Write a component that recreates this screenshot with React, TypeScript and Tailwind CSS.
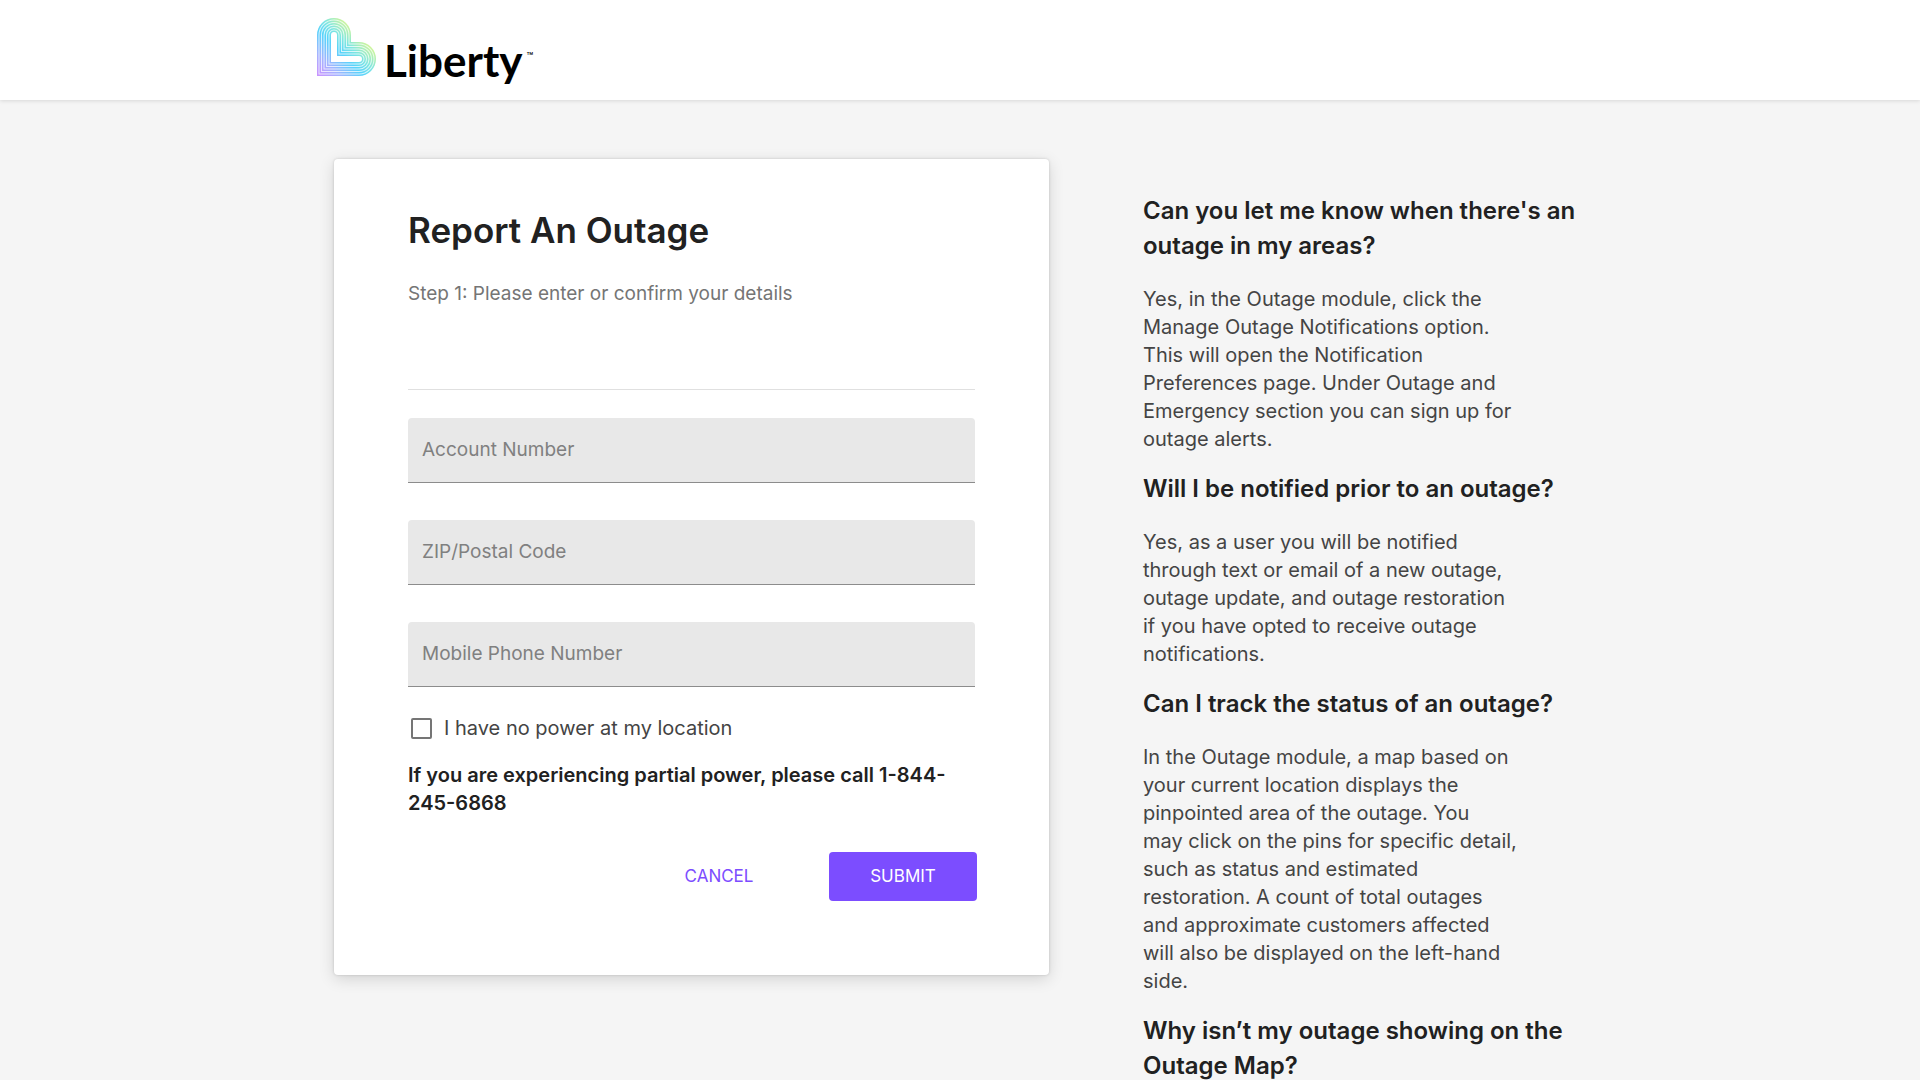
import { useState } from 'react';
import type { FormEvent } from 'react';

interface FaqItem {
  question: string;
  answer: string;
}

const faqs: FaqItem[] = [
  {
    question: "Can you let me know when there's an outage in my areas?",
    answer:
      'Yes, in the Outage module, click the Manage Outage Notifications option. This will open the Notification Preferences page. Under Outage and Emergency section you can sign up for outage alerts.',
  },
  {
    question: 'Will I be notified prior to an outage?',
    answer:
      'Yes, as a user you will be notified through text or email of a new outage, outage update, and outage restoration if you have opted to receive outage notifications.',
  },
  {
    question: 'Can I track the status of an outage?',
    answer:
      'In the Outage module, a map based on your current location displays the pinpointed area of the outage. You\nmay click on the pins for specific detail, such as status and estimated restoration. A count of total outages and approximate customers affected will also be displayed on the left-hand side.',
  },
  {
    question: 'Why isn’t my outage showing on the Outage Map?',
    answer: '',
  },
];

const fields = [
  { id: 'accountNumber', label: 'Account Number', type: 'text' },
  { id: 'postalCode', label: 'ZIP/Postal Code', type: 'text' },
  { id: 'mobilePhone', label: 'Mobile Phone Number', type: 'tel' },
];

// Stroke widths of the nested outlines, alternating filled and cut out
const rings = [34, 31, 29, 26, 24, 21, 19, 16, 14, 11, 9, 6];

const LogoMark = () => (
  <svg className="h-[59px] w-[59px] shrink-0" viewBox="0 0 59 59" aria-hidden="true">
    <defs>
      <linearGradient id="markFill" gradientUnits="userSpaceOnUse" x1="2" y1="57" x2="42" y2="17">
        <stop offset="0" stopColor="#c796ff" />
        <stop offset="0.25" stopColor="#a3b4ff" />
        <stop offset="0.55" stopColor="#58d3fb" />
        <stop offset="0.75" stopColor="#7fe6e0" />
        <stop offset="1" stopColor="#cff59a" />
      </linearGradient>
      <mask id="markRings" maskUnits="userSpaceOnUse" x="0" y="0" width="59" height="59">
        {rings.map((width, i) => (
          <path
            key={width}
            d="M17 17V41H42"
            fill="none"
            stroke={i % 2 === 0 ? '#fff' : i === rings.length - 1 ? '#000' : '#444'}
            strokeWidth={width}
            strokeLinecap="round"
            strokeLinejoin="miter"
          />
        ))}
      </mask>
    </defs>
    <rect width="59" height="59" fill="url(#markFill)" mask="url(#markRings)" />
  </svg>
);

const Header = () => (
  <header className="relative bg-white shadow-[0_1px_4px_rgba(0,0,0,0.12)]">
    <div className="mx-auto flex h-[100px] max-w-[1286px] items-start pt-[18px]">
      <a href="#" aria-label="Liberty" className="flex items-start text-black">
        <LogoMark />
        <span className="ml-2 mt-4 font-['Lato',sans-serif] text-[44px] font-bold leading-[52px]">Liberty</span>
        <span className="ml-1 mt-[30px] text-[11px] leading-4">™</span>
      </a>
    </div>
  </header>
);

const App = () => {
  const [values, setValues] = useState<Record<string, string>>({});
  const [noPower, setNoPower] = useState(false);

  const handleSubmit = (e: FormEvent) => {
    e.preventDefault();
  };

  return (
    <div className="min-h-screen bg-[#f5f5f5] font-['Inter',sans-serif] text-[#212121]">
      <Header />

      <main className="mx-auto grid max-w-[1286px] grid-cols-1 gap-x-[94px] px-[17px] pt-[59px] lg:grid-cols-[715fr_443fr]">
        <form
          onSubmit={handleSubmit}
          className="self-start rounded bg-white px-[74px] pb-[74px] pt-[46px] shadow-[0_4px_16px_rgba(0,0,0,0.14),0_0_3px_rgba(0,0,0,0.16)]"
        >
          <h1 className="text-[35px] font-semibold leading-[50px]">Report An Outage</h1>
          <p className="mt-[25px] text-[19px] leading-7 text-[#757575]">Step 1: Please enter or confirm your details</p>
          <hr className="mt-[81px] border-[#e0e0e0]" />

          <div className="mt-7 flex flex-col gap-[37px]">
            {fields.map(field => (
              <div key={field.id} className="relative">
                <input
                  id={field.id}
                  type={field.type}
                  placeholder=" "
                  value={values[field.id] ?? ''}
                  onChange={e => setValues(prev => ({ ...prev, [field.id]: e.target.value }))}
                  className="peer block h-[65px] w-full rounded-t border-b border-[#8c8c8c] bg-[#e8e8e8] px-3.5 pt-4 text-[19px] outline-none focus:border-[#7c4dff]"
                />
                {/* Floats to the top of the field on focus or once filled */}
                <label
                  htmlFor={field.id}
                  className="absolute left-3.5 top-1 text-xs leading-7 text-[#808080] peer-placeholder-shown:top-[18px] peer-placeholder-shown:text-[19px] peer-placeholder-shown:leading-7 peer-focus:top-1 peer-focus:text-xs"
                >
                  {field.label}
                </label>
              </div>
            ))}
          </div>

          <label htmlFor="noPower" className="mt-[27px] flex items-center gap-3 pl-[3px] text-[20px] leading-7 text-[#444444]">
            <input
              id="noPower"
              type="checkbox"
              checked={noPower}
              onChange={e => setNoPower(e.target.checked)}
              className="h-[21px] w-[21px] appearance-none rounded-xs border-2 border-[#757575] checked:bg-[#7c4dff]"
            />
            I have no power at my location
          </label>

          <p className="mt-[19px] text-[20px] font-semibold leading-7">
            If you are experiencing partial power, please call 1-844-245-6868
          </p>

          <div className="-mr-0.5 mt-[35px] flex items-center justify-end">
            <button type="button" className="h-[49px] w-[148px] text-[17px] text-[#7c4dff]">CANCEL</button>
            <button type="submit" className="ml-9 h-[49px] w-[148px] rounded bg-[#7c4dff] text-[17px] text-white">SUBMIT</button>
          </div>
        </form>

        <aside className="pt-[34px]">
          {faqs.map(faq => (
            <section key={faq.question} className="mb-[18px] last:mb-0">
              <h2 className="text-[24px] font-semibold leading-[35px]">{faq.question}</h2>
              {faq.answer && (
                <p className="mt-[22px] max-w-[378px] whitespace-pre-line text-[20px] leading-7 text-[#444444]">{faq.answer}</p>
              )}
            </section>
          ))}
        </aside>
      </main>
    </div>
  );
};

export default App;
